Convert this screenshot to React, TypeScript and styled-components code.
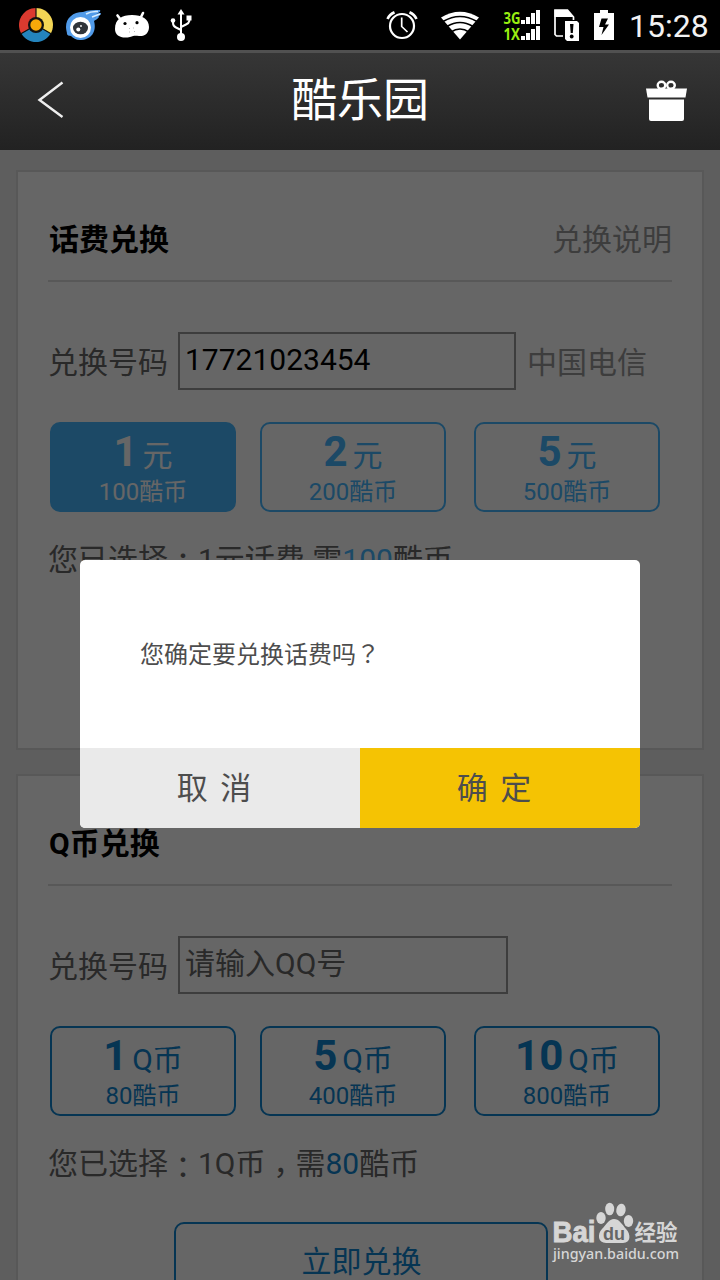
import React from 'react';
import styled, { createGlobalStyle } from 'styled-components';

const Global = createGlobalStyle`
  * { box-sizing: border-box; }
  html, body { margin: 0; padding: 0; background: #000; }
  body { font-family: Roboto, "Noto Sans CJK TC", "Noto Sans CJK SC", sans-serif; }
  button, input { font-family: inherit; }
`;

const Screen = styled.div`
  position: relative;
  width: 720px;
  height: 1280px;
  overflow: hidden;
  display: flex;
  flex-direction: column;
  font-family: Roboto, "Noto Sans CJK SC", sans-serif;
`;

const StatusBar = styled.div`
  flex: none;
  height: 50px;
  background: #000;
  display: flex;
  justify-content: space-between;
`;

const StatusGroup = styled.div`
  display: flex;
  align-items: flex-start;
`;

const Icon = styled.svg<{ $gap?: number }>`
  display: block;
  flex: none;
  margin-left: ${(p) => p.$gap ?? 0}px;
`;

const Clock = styled.span`
  width: 92px;
  padding-left: 1px;
  color: #f2f2f2;
  font-size: 32px;
  line-height: 53px;
  white-space: nowrap;
`;

const NetText = styled.text`
  font-family: "Open Sans", sans-serif;
  font-weight: 700;
  font-size: 15.5px;
  fill: #99ee11;
`;

const Header = styled.header`
  flex: none;
  height: 100px;
  border-top: 3px solid #515151;
  background: linear-gradient(#363636, #222);
  display: flex;
  justify-content: space-between;
`;

const Title = styled.h1`
  margin: 0;
  font-size: 46px;
  font-weight: 400;
  line-height: 95px;
  color: #fff;
  letter-spacing: -0.2px;
`;

const Body = styled.main`
  position: relative;
  flex: 1;
  min-height: 0;
  overflow: hidden;
  background: #ebebeb;
  padding: 20px 16px 0;
  display: flex;
  flex-direction: column;
  gap: 24px;
`;

const Card = styled.section<{ $height: number }>`
  flex: none;
  height: ${(p) => p.$height}px;
  border: 2px solid #dcdcdc;
  background: #fff;
  padding: 0 30px;
`;

const CardHead = styled.div`
  height: 110px;
  padding-top: 48px;
  border-bottom: 2px solid #dcdcdc;
  display: flex;
  justify-content: space-between;
  font-size: 30px;
  line-height: 40px;
`;

const CardTitle = styled.h2`
  margin: 0;
  padding-left: 1px;
  font-size: 30px;
  font-weight: 700;
  color: #000;
`;

const Explain = styled.span`
  color: #999;
`;

const FieldRow = styled.div`
  margin-top: 50px;
  height: 58px;
  display: flex;
  align-items: flex-start;
  font-size: 30px;
  line-height: 61px;
  color: #666;
`;

const Field = styled.input<{ $width: number }>`
  width: ${(p) => p.$width}px;
  height: 58px;
  margin: 0 11px 0 10px;
  padding: 0 5px 4px;
  border: 2px solid #999;
  border-radius: 0;
  background: #fff;
  font-size: 30px;
  color: #000;
  outline: none;
  &::placeholder { color: #666; opacity: 1; }
`;

const Carrier = styled.span`
  color: #999;
`;

const Options = styled.div`
  margin-top: 32px;
  padding-left: 2px;
  display: grid;
  grid-template-columns: 186px 186px 186px;
  column-gap: 24px;
`;

const Option = styled.button<{ $tone: string; $active?: boolean; $shift?: boolean }>`
  height: 90px;
  margin: 0 0 0 ${(p) => (p.$shift ? 4 : 0)}px;
  width: 186px;
  padding: 0;
  border: 2px solid ${(p) => p.$tone};
  border-radius: 10px;
  background: ${(p) => (p.$active ? p.$tone : 'transparent')};
  color: ${(p) => (p.$active ? '#fff' : p.$tone)};
  display: flex;
  flex-direction: column;
  align-items: center;
`;

const Amount = styled.span`
  display: flex;
  align-items: baseline;
  gap: 5px;
  height: 50px;
  font-size: 30px;
  line-height: 56px;
  b { font-size: 42px; font-weight: 700; }
`;

const Cost = styled.span`
  font-size: 24px;
  line-height: 36px;
`;

const Summary = styled.p`
  margin: 25px 0 0;
  font-size: 30px;
  line-height: 40px;
  color: #666;
  white-space: pre;
`;

const Strong = styled.span<{ $tone: string }>`
  color: ${(p) => p.$tone};
`;

const Centered = styled.span`
  font-family: "Noto Sans CJK TC", sans-serif;
`;

const Colon = styled(Centered)`
  position: relative;
  top: 4px;
`;

const Comma = styled(Centered)`
  position: relative;
  top: 9px;
`;

const Submit = styled.button<{ $tone: string }>`
  display: block;
  width: 374px;
  height: 80px;
  margin: 38px 0 0 126px;
  padding: 0 0 0 1px;
  border: 2px solid ${(p) => p.$tone};
  border-radius: 10px;
  background: transparent;
  color: ${(p) => p.$tone};
  font-size: 30px;
  line-height: 76px;
`;

const Mask = styled.div`
  position: absolute;
  inset: 0;
  background: rgba(0, 0, 0, 0.6);
`;

const Dialog = styled.div`
  position: absolute;
  left: 80px;
  top: 560px;
  width: 560px;
  height: 268px;
  border-radius: 5px;
  overflow: hidden;
  background: #fff;
  display: flex;
  flex-direction: column;
`;

const Message = styled.p`
  margin: 0;
  height: 188px;
  padding: 0 60px;
  font-size: 24px;
  line-height: 185px;
  color: #4d4d4d;
`;

const Actions = styled.div`
  display: grid;
  grid-template-columns: 1fr 1fr;
  height: 80px;
`;

const Action = styled.button<{ $bg: string }>`
  border: 0;
  padding: 1px 12px 0 0;
  background: ${(p) => p.$bg};
  color: #4d4d4d;
  font-size: 31px;
  line-height: 79px;
  word-spacing: 5px;
`;

const Watermark = styled.div`
  position: absolute;
  left: 548px;
  top: 1198px;
`;

const WmText = styled.text`
  font-family: "Liberation Sans", "Noto Sans CJK SC", sans-serif;
  font-weight: 700;
`;

const SKY = '#46b7ff';
const NAVY = '#0f84cf';

type Plan = { n: string; unit: string; cost: string };

const PHONE: Plan[] = [
  { n: '1', unit: '元', cost: '100酷币' },
  { n: '2', unit: '元', cost: '200酷币' },
  { n: '5', unit: '元', cost: '500酷币' },
];

const QCOIN: Plan[] = [
  { n: '1', unit: 'Q币', cost: '80酷币' },
  { n: '5', unit: 'Q币', cost: '400酷币' },
  { n: '10', unit: 'Q币', cost: '800酷币' },
];

function Plans({ plans, tone, active }: { plans: Plan[]; tone: string; active?: number }) {
  return (
    <Options>
      {plans.map((p, i) => (
        <Option key={p.cost} $tone={tone} $active={i === active} $shift={i === 2}>
          <Amount>
            <b>{p.n}</b>
            <span>{p.unit}</span>
          </Amount>
          <Cost>{p.cost}</Cost>
        </Option>
      ))}
    </Options>
  );
}

function Status() {
  return (
    <StatusBar>
      <StatusGroup>
        <Icon $gap={18} width="36" height="50" viewBox="18 0 36 50">
          <path d="M36 25 L36 8 A17 17 0 0 0 21.3 33.5 Z" fill="#dc3a2f" />
          <path d="M36 25 L36 8 A17 17 0 0 1 50.7 33.5 Z" fill="#f3d655" />
          <path d="M36 25 L21.3 33.5 A17 17 0 0 0 50.7 33.5 Z" fill="#2484bd" />
          <path d="M36 25 V8 M36 25 L20.5 34 M36 25 L51.5 34" stroke="#111" strokeWidth="1.2" />
          <circle cx="36" cy="25" r="8" fill="#111" />
          <circle cx="36" cy="25" r="5.700" fill="#f8a90a" />
        </Icon>
        <Icon $gap={10} width="40" height="50" viewBox="64 0 40 50">
          <path d="M66 27 C66 18 73 12 83 12 C88 10 94 10 100 10 C101 12 99 13 96 13.5 L101 13 C101 16 97 17 94 17.5 C98 17 99 16 99 17 C98 19 95 20 94 21 C97 32 91 40 80 40 C76 40 73 38 71 36 C69 36 67 35 67 34 C67 32 66 30 66 27 Z" fill="#519be9" />
          <path d="M86 14 Q91 11 98 11.5 M92 17 L100 14" stroke="#d9edff" strokeWidth="1.5" fill="none" />
          <circle cx="80.500" cy="27.500" r="10.500" fill="#fff" />
          <ellipse cx="80.500" cy="28" rx="7.500" ry="6.300" fill="#30343a" />
          <circle cx="78.300" cy="29.500" r="2" fill="#fff" />
          <circle cx="81" cy="26" r="0.900" fill="#fff" />
        </Icon>
        <Icon $gap={10} width="36" height="50" viewBox="114 0 36 50">
          <path d="M117.5 15.500 L121 20 M143 13 L140.500 18" stroke="#fff" strokeWidth="2.600" strokeLinecap="round" />
          <path d="M115 29 C115 19 122 15 132 15 C142 15 149 19 149 27 C149 33 145 36.500 139 36 C135 35.500 134 35.500 130 37 C122 39 115 36 115 29 Z" fill="#fff" />
          <circle cx="125" cy="23.500" r="1.600" fill="#000" />
          <circle cx="137" cy="22.700" r="1.600" fill="#000" />
          <path d="M129 28.500h1M133 28h1M129 32h1M134 31.500h1" stroke="#aaa" strokeWidth="0.800" />
        </Icon>
        <Icon $gap={18} width="28" height="50" viewBox="168 0 28 50">
          <path d="M181 37 V12 M173 21 V23 Q173 26 176 27.500 L181 30 M189.300 18 V21 Q189 23 186 24.500 L181 27" stroke="#fff" strokeWidth="2" fill="none" />
          <path d="M181 9 L184.500 14.500 H177.500 Z" fill="#fff" />
          <circle cx="173" cy="20.500" r="2.300" fill="#fff" />
          <rect x="186.500" y="15.500" width="5" height="5" fill="#fff" />
          <circle cx="181" cy="37" r="4" fill="#fff" />
        </Icon>
      </StatusGroup>
      <StatusGroup>
        <Icon width="36" height="50" viewBox="384 0 36 50">
          <circle cx="402" cy="26" r="12" fill="none" stroke="#fff" strokeWidth="2.200" />
          <path d="M401.700 17.500 V26.500 L407.500 32" fill="none" stroke="#fff" strokeWidth="1.700" />
          <path d="M387.500 19 Q389.500 14.500 394.500 12.300 M416.500 19 Q414.500 14.500 409.500 12.300" fill="none" stroke="#fff" strokeWidth="2.600" />
        </Icon>
        <Icon $gap={20} width="40" height="50" viewBox="440 0 40 50">
          <path d="M460 39.500 L441 17.500 Q460 6 479 17.500 Z" fill="#fff" />
          <path d="M443 21.500 Q460 11.500 477 21.500 M447 26.500 Q460 18.500 473 26.500 M451 32 Q460 26 469 32" fill="none" stroke="#000" strokeWidth="1.700" />
        </Icon>
        <Icon $gap={22} width="40" height="50" viewBox="502 0 40 50">
          <NetText x="503.500" y="24" textLength="17" lengthAdjust="spacingAndGlyphs">3G</NetText>
          <NetText x="503.500" y="40" textLength="16.500" lengthAdjust="spacingAndGlyphs">1X</NetText>
          <path d="M521 20h4v4h-4zM526 17h4v7h-4zM531 13h4v11h-4zM536 10h4v14h-4zM521 36h4v4h-4zM526 33h4v7h-4zM531 29h4v11h-4zM536 26h4v14h-4z" fill="#fff" />
        </Icon>
        <Icon $gap={10} width="30" height="50" viewBox="552 0 30 50">
          <path d="M555 10 H567.500 L573.500 17 V36 H556.500 L555 34.500 Z" fill="#000" stroke="#fff" strokeWidth="1.700" />
          <path d="M554.500 17 V10 H567.500 L573.500 17 Z" fill="#fff" />
          <rect x="563" y="20" width="17" height="22" fill="#000" />
          <path d="M565 21 H577 L579 23 V41 H567 L565 39 Z" fill="#fff" />
          <path d="M570 24 H573.500 L572.800 33 H570.700 Z" fill="#000" />
          <circle cx="571.700" cy="36.500" r="1.900" fill="#000" />
        </Icon>
        <Icon $gap={10} width="24" height="50" viewBox="592 0 24 50">
          <path d="M594 13 H600 V10 H608 V13 H614 V40 H594 Z" fill="#fff" />
          <path d="M601.500 18.500 H608 L605 24.500 H609 L601.500 35 L603.500 27 H599 Z" fill="#000" />
        </Icon>
        <Icon width="12" height="50" viewBox="0 0 12 50" />
        <Clock>15:28</Clock>
      </StatusGroup>
    </StatusBar>
  );
}

export default function App() {
  return (
    <>
      <Global />
      <Screen>
        <Status />
        <Header>
          <Icon width="100" height="97" viewBox="0 53 100 97">
            <path d="M62.500 82.500 L39.500 100 L62.500 117" fill="none" stroke="#eee" strokeWidth="2.400" />
          </Icon>
          <Title>酷乐园</Title>
          <Icon width="100" height="97" viewBox="620 53 100 97">
            <g fill="#fff">
              <path d="M646 88.500 H687 L685.500 97.500 H647.500 Z" />
              <path d="M649 99.500 H684 V119 Q684 121 682 121 H651 Q649 121 649 119 Z" />
            </g>
            <ellipse cx="661.500" cy="85.300" rx="3.800" ry="3.500" fill="#2c2c2c" stroke="#fff" strokeWidth="2.400" />
            <ellipse cx="671" cy="85.300" rx="3.800" ry="3.500" fill="#2c2c2c" stroke="#fff" strokeWidth="2.400" />
          </Icon>
        </Header>
        <Body>
          <Card $height={580}>
            <CardHead>
              <CardTitle>话费兑换</CardTitle>
              <Explain>兑换说明</Explain>
            </CardHead>
            <FieldRow>
              <span>兑换号码</span>
              <Field $width={338} defaultValue="17721023454" />
              <Carrier>中国电信</Carrier>
            </FieldRow>
            <Plans plans={PHONE} tone={SKY} active={0} />
            <Summary>
              您已选择<Colon>：</Colon>1元话费 需<Strong $tone={SKY}>100</Strong>酷币
            </Summary>
          </Card>
          <Card $height={580}>
            <CardHead>
              <CardTitle>Q币兑换</CardTitle>
            </CardHead>
            <FieldRow>
              <span>兑换号码</span>
              <Field $width={330} placeholder="请输入QQ号" />
            </FieldRow>
            <Plans plans={QCOIN} tone={NAVY} />
            <Summary>
              您已选择<Colon>：</Colon>1Q币<Comma>，</Comma>需<Strong $tone={NAVY}>80</Strong>酷币
            </Summary>
            <Submit $tone={NAVY}>立即兑换</Submit>
          </Card>
          <Mask />
        </Body>
        <Dialog>
          <Message>您确定要兑换话费吗<Centered>？</Centered></Message>
          <Actions>
            <Action $bg="#eaeaea">取 消</Action>
            <Action $bg="#f5c303">确 定</Action>
          </Actions>
        </Dialog>
        <Watermark>
          <svg width="140" height="72" viewBox="548 1198 140 72" fill="#d6d6d6">
            <WmText x="552.500" y="1242" fontSize="29" stroke="#d6d6d6" strokeWidth="0.900" textLength="43" lengthAdjust="spacingAndGlyphs">Bai</WmText>
            <ellipse cx="601" cy="1218" rx="4.700" ry="6" />
            <ellipse cx="609.700" cy="1209" rx="4.500" ry="6.300" />
            <ellipse cx="621" cy="1210" rx="4.700" ry="6.300" transform="rotate(10 621 1210)" />
            <ellipse cx="628.500" cy="1221" rx="4.700" ry="6" />
            <path d="M614 1219 C619 1219 622 1224 626 1229 C631 1234 631 1243 623 1243 H606 C598 1243 597 1234 602 1229 C606 1225 609 1219 614 1219 Z" />
            <WmText x="603" y="1239.500" fontSize="19" fill="#666" textLength="22" lengthAdjust="spacingAndGlyphs">du</WmText>
            <WmText x="634.500" y="1240" fontSize="22" textLength="43" lengthAdjust="spacingAndGlyphs">经验</WmText>
            <text x="553" y="1259" fontSize="15" fontFamily="'Noto Sans', sans-serif" fontWeight="500" textLength="126" lengthAdjust="spacingAndGlyphs">jingyan.baidu.com</text>
          </svg>
        </Watermark>
      </Screen>
    </>
  );
}
